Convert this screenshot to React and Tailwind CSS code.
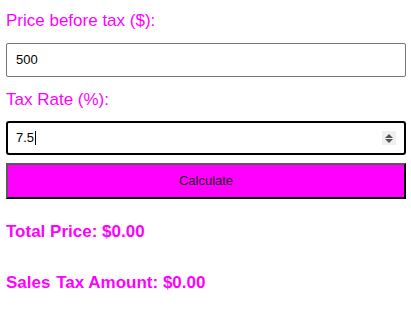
export default function App() {
  return (
    <div
      className="w-[411px] h-[320px] bg-white pl-[6px] pr-[5px] pt-[11px]"
      style={{ fontFamily: '"Liberation Sans", Arial, sans-serif' }}
    >
      <div className="text-[17px] leading-[20px] text-[#ff00ff]">Price before tax ($):</div>
      <div className="mt-[12px] h-[34px] border border-[#767676] rounded-[2px] flex items-center pl-[9px] text-[13px] text-black bg-white">
        500
      </div>
      <div className="mt-[13px] text-[17px] leading-[20px] text-[#ff00ff]">Tax Rate (%):</div>
      <div className="mt-[11px] h-[34px] border-2 border-black rounded-[3px] flex items-center pl-[8px] pr-[8px] text-[13px] text-black bg-white">
        <span>7.5</span>
        <span className="inline-block w-[1px] h-[14px] bg-black ml-[1px]"></span>
        <div className="ml-auto w-[14px] h-[14px] bg-[#efefef] flex flex-col items-center justify-center gap-[1px]">
          <svg width="8" height="4" viewBox="0 0 8 4"><polygon points="0,4 8,4 4,0" fill="#555" /></svg>
          <svg width="8" height="4" viewBox="0 0 8 4"><polygon points="0,0 8,0 4,4" fill="#555" /></svg>
        </div>
      </div>
      <div className="mt-[8px] h-[36px] bg-[#ff00ff] border-2 border-t-[#5a5a5a] border-l-[#5a5a5a] border-b-black border-r-black flex items-center justify-center text-[13px] text-[#1a1a1a]">
        Calculate
      </div>
      <div className="mt-[23px] text-[17px] leading-[20px] font-bold text-[#ff00ff]">Total Price: $0.00</div>
      <div className="mt-[31px] text-[17px] leading-[20px] font-bold text-[#ff00ff]">
        <span className="mr-[1px]">Sales</span> Tax Amount: $0.00
      </div>
    </div>
  );
}
